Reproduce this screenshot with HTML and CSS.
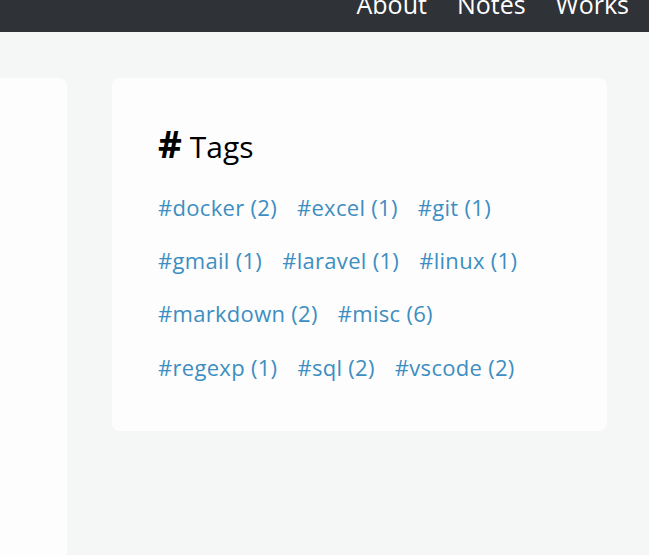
FILE: index.html
```html
<!DOCTYPE html>
<html lang="en">
<head>
<meta charset="utf-8">
<title>Tags</title>
<link rel="stylesheet" href="styles.css">
</head>
<body>
<header class="nav">
  <ul class="nav-list">
    <li><a href="#">About</a></li>
    <li><a href="#">Notes</a></li>
    <li><a href="#">Works</a></li>
  </ul>
</header>
<main class="layout">
  <section class="card card-main"></section>
  <aside class="card card-tags">
    <h2 class="tags-title"><span class="hash">#</span> Tags</h2>
    <div class="tag-list">
      <a class="tag" href="#">#docker (2)</a>
      <a class="tag" href="#">#excel (1)</a>
      <a class="tag" href="#">#git (1)</a>
      <a class="tag" href="#">#gmail (1)</a>
      <a class="tag" href="#">#laravel (1)</a>
      <a class="tag" href="#">#linux (1)</a>
      <a class="tag" href="#">#markdown (2)</a>
      <a class="tag" href="#">#misc (6)</a>
      <a class="tag" href="#">#regexp (1)</a>
      <a class="tag" href="#">#sql (2)</a>
      <a class="tag" href="#">#vscode (2)</a>
    </div>
  </aside>
</main>
</body>
</html>
```
FILE: styles.css
```css
* { box-sizing: border-box; }
html, body {
  margin: 0;
  padding: 0;
  background: #f5f6f6;
  font-family: "Open Sans", "Liberation Sans", sans-serif;
}
.nav {
  height: 32px;
  background: #2f3237;
  overflow: hidden;
}
.nav-list {
  list-style: none;
  margin: -12px 20px 0 0;
  padding: 0;
  display: flex;
  justify-content: flex-end;
  gap: 30px;
}
.nav-list a {
  color: #ffffff;
  text-decoration: none;
  font-size: 25px;
  line-height: 32px;
}
.layout {
  display: grid;
  grid-template-columns: 67px 495px;
  column-gap: 45px;
  padding-top: 46px;
  align-items: start;
}
.card {
  background: #fdfdfd;
  border-radius: 8px;
}
.card-main {
  height: 600px;
  border-top-left-radius: 0;
}
.card-tags {
  padding: 52px 69px 49px 46px;
}
.tags-title {
  margin: 0 0 27px 0;
  font-size: 30px;
  line-height: 34.8px;
  font-weight: 400;
  color: #000;
}
.hash {
  font-weight: 700;
  font-size: 37px;
  line-height: 0;
}
.tag-list {
  display: flex;
  flex-wrap: wrap;
  column-gap: 20px;
  row-gap: 23.3px;
}
.tag {
  color: #3d8ec1;
  text-decoration: none;
  font-size: 22px;
  line-height: 30px;
  letter-spacing: 0.3px;
}
```
